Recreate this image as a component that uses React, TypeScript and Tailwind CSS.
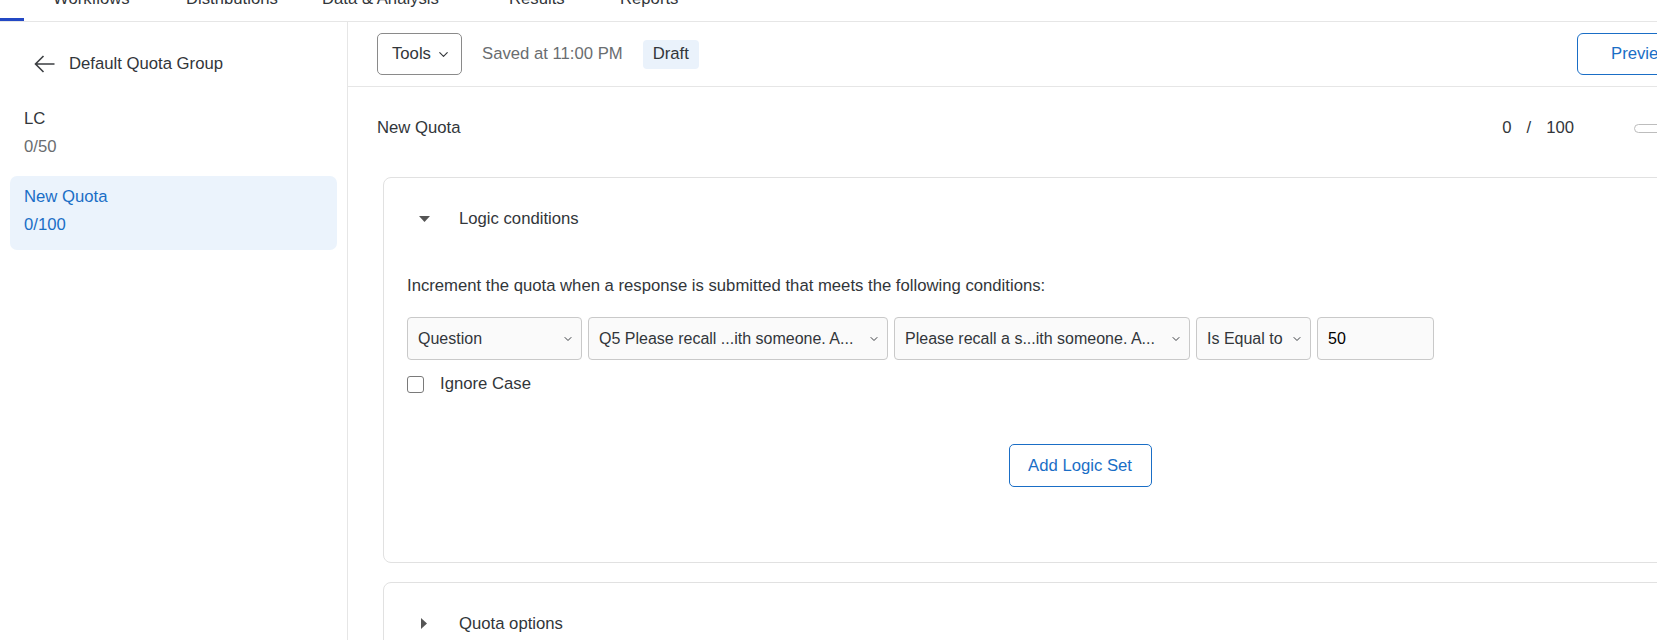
import { ChevronDown } from "lucide-react";

const font = { fontFamily: '"Liberation Sans", Arial, sans-serif' };

const selectCls =
  "flex h-[43px] shrink-0 items-center justify-between gap-[4px] rounded-[4px] border border-[#c9c9c9] bg-[#fafafa] pl-[10px] pr-[7px] text-[16px] text-[#32363a]";

function TopNav() {
  return (
    <div className="flex h-[22px] border-b border-[#e6e6e6] overflow-hidden">
      <div className="h-[3px] w-[24px] self-end bg-[#2348c4]" />
      <div className="ml-[29px] -mt-[13px] flex h-[24px] text-[16.7px] leading-[24px] text-[#32363a]">
        <span className="w-[133px]">Workflows</span>
        <span className="w-[136px]">Distributions</span>
        <span className="w-[187px]">Data &amp; Analysis</span>
        <span className="w-[111px]">Results</span>
        <span>Reports</span>
      </div>
    </div>
  );
}

function QuotaItem({ name, count, active }: { name: string; count: string; active?: boolean }) {
  return (
    <div
      className={
        "h-[74px] rounded-[7px] px-[14px] pt-[7px] text-[16.7px] leading-[28px] " +
        (active ? "bg-[#ebf3fc] text-[#1a6ec6]" : "text-[#32363a]")
      }
    >
      <div>{name}</div>
      <div className={active ? "" : "text-[#6a6d70]"}>{count}</div>
    </div>
  );
}

function Sidebar() {
  return (
    <aside className="w-[348px] shrink-0 border-r border-[#e6e6e6] px-[10px] pt-[30px]">
      <div className="flex h-[24px] items-center gap-[14px] pl-[24px] text-[16.7px] text-[#32363a]">
        <svg width="21" height="18" viewBox="0 0 21 18" fill="none" stroke="#3b3e42" strokeWidth="1.6">
          <path d="M20.5 9H1.5M9.5 1L1.5 9l8 8" />
        </svg>
        <span>Default Quota Group</span>
      </div>
      <div className="mt-[22px] flex flex-col gap-[4px]">
        <QuotaItem name="LC" count="0/50" />
        <QuotaItem name="New Quota" count="0/100" active />
      </div>
    </aside>
  );
}

function Caret({ open }: { open?: boolean }) {
  return (
    <span className="flex w-[12px] items-center justify-center">
      {open ? (
        <svg width="11" height="6" viewBox="0 0 11 6">
          <path d="M0 0h11L5.5 6z" fill="#555" />
        </svg>
      ) : (
        <svg width="6" height="11" viewBox="0 0 6 11">
          <path d="M0 0v11l6-5.5z" fill="#555" />
        </svg>
      )}
    </span>
  );
}

function Select({ label, w }: { label: string; w: string }) {
  return (
    <div className={selectCls + " " + w}>
      <span className="overflow-hidden whitespace-nowrap">{label}</span>
      <ChevronDown size={12} strokeWidth={2} className="shrink-0 text-[#3b3e42]" />
    </div>
  );
}

function Main() {
  return (
    <main className="w-[1360px] shrink-0">
      <div className="flex h-[65px] items-center border-b border-[#e6e6e6] px-[29px] text-[16.7px]">
        <button className="flex h-[42px] w-[85px] items-center gap-[5px] rounded-[5px] border border-[#8a8a8a] pl-[14px] text-[#32363a]">
          Tools
          <ChevronDown size={15} strokeWidth={1.8} />
        </button>
        <span className="ml-[20px] text-[#6a6d70]">Saved at 11:00 PM</span>
        <span className="ml-[20px] flex h-[29px] items-center rounded-[4px] bg-[#eaf2fb] px-[10px] text-[#32363a]">
          Draft
        </span>
        <button className="ml-auto flex h-[42px] w-[102px] items-center rounded-[6px] border border-[#1a6ec6] pl-[33px] text-[#1a6ec6]">
          Preview
        </button>
      </div>

      <div className="px-[29px]">
        <div className="mt-[29px] flex h-[24px] items-center text-[16.7px] text-[#32363a]">
          <span>New Quota</span>
          <span className="ml-auto flex gap-[15px]">
            <span>0</span>
            <span>/</span>
            <span>100</span>
          </span>
          <span className="ml-[60px] h-[9px] w-[45px] rounded-full border border-[#bdbdbd]" />
        </div>

        <section className="ml-[6px] mt-[37px] w-[1394px] rounded-[8px] border border-[#e1e1e1]">
          <div className="flex h-[81px] items-center gap-[29px] pl-[34px] text-[16.7px] text-[#32363a]">
            <Caret open />
            <span>Logic conditions</span>
          </div>
          <div className="px-[23px] pb-[75px] text-[16.7px] text-[#32363a]">
            <p className="mt-[15px] leading-[24px]">
              Increment the quota when a response is submitted that meets the following conditions:
            </p>
            <div className="mt-[19px] flex gap-[6px]">
              <Select label="Question" w="w-[175px]" />
              <Select label="Q5 Please recall ...ith someone. A..." w="w-[300px]" />
              <Select label="Please recall a s...ith someone. A..." w="w-[296px]" />
              <Select label="Is Equal to" w="w-[115px]" />
              <div className="flex h-[43px] w-[117px] items-center rounded-[4px] border border-[#c9c9c9] bg-[#fafafa] pl-[10px] text-[16px] text-black">
                50
              </div>
            </div>
            <label className="mt-[12px] flex h-[24px] items-center gap-[16px]">
              <span className="h-[17px] w-[17px] rounded-[3px] border border-[#7a7a7a] bg-white" />
              Ignore Case
            </label>
            <div className="mt-[48px] flex justify-center">
              <button className="h-[43px] w-[143px] rounded-[5px] border border-[#1a6ec6] text-[#1a6ec6]">
                Add Logic Set
              </button>
            </div>
          </div>
        </section>

        <section className="ml-[6px] mt-[19px] h-[120px] w-[1394px] rounded-[8px] border border-[#e1e1e1]">
          <div className="flex h-[81px] items-center gap-[29px] pl-[34px] text-[16.7px] text-[#32363a]">
            <Caret />
            <span>Quota options</span>
          </div>
        </section>
      </div>
    </main>
  );
}

export default function App() {
  return (
    <div className="h-[640px] w-[1657px] overflow-hidden bg-white" style={font}>
      <TopNav />
      <div className="flex">
        <Sidebar />
        <Main />
      </div>
    </div>
  );
}
